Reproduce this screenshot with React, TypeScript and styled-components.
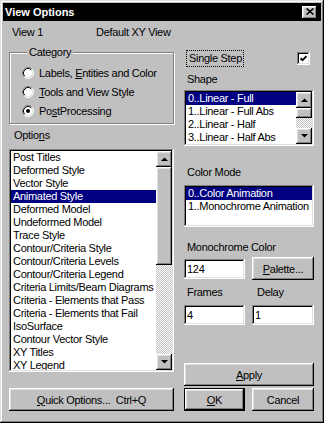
import styled, { createGlobalStyle, css } from "styled-components";

const GlobalStyle = createGlobalStyle`
  html, body { margin: 0; padding: 0; background: #c0c0c0; }
  body {
    font-family: "Liberation Sans", Arial, sans-serif;
    font-size: 11px;
    letter-spacing: -0.3px;
    color: #000;
  }
`;

const raised = css`
  box-shadow: inset -1px -1px #000, inset 1px 1px #fff, inset -2px -2px #808080, inset 2px 2px #dfdfdf;
`;
const sunken = css`
  box-shadow: inset -1px -1px #fff, inset 1px 1px #808080, inset -2px -2px #dfdfdf, inset 2px 2px #000;
`;

const Window = styled.div`
  width: 324px;
  height: 423px;
  box-sizing: border-box;
  padding: 3px;
  background: #c0c0c0;
  box-shadow: inset -1px -1px #000, inset 1px 1px #dfdfdf, inset -2px -2px #808080, inset 2px 2px #fff;
  display: flex;
  flex-direction: column;
`;

const TitleBar = styled.div`
  height: 18px;
  background: #000;
  display: flex;
  align-items: center;
  padding: 0 4px 0 2px;
`;

const Title = styled.span`
  color: #fff;
  font-weight: bold;
  letter-spacing: 0;
`;

const CloseButton = styled.div`
  margin-left: auto;
  width: 15px;
  height: 13px;
  background: #c0c0c0;
  ${raised};
  display: flex;
  align-items: center;
  justify-content: center;
  padding-bottom: 1px;
  box-sizing: border-box;
`;

const Body = styled.div`
  flex: 1;
  display: flex;
  flex-direction: column;
  padding: 5px 7px 9px 6px;
`;

const InfoRow = styled.div`
  display: flex;
  line-height: 13px;
  padding-left: 3px;
`;

const InfoCell = styled.span<{ $w?: number }>`
  width: ${(p) => (p.$w ? `${p.$w}px` : "auto")};
`;

const Columns = styled.div`
  flex: 1;
  margin-top: 6px;
  display: grid;
  grid-template-columns: 165px 130px;
  column-gap: 10px;
`;

const Column = styled.div`
  display: flex;
  flex-direction: column;
  min-height: 0;
`;

const GroupBox = styled.fieldset`
  margin: 0;
  min-width: 0;
  padding: 4px 0 3px 12px;
  border: 1px solid #808080;
  box-shadow: inset 1px 1px #fff, 1px 1px #fff;
`;

const Legend = styled.legend`
  margin-left: 5px;
  padding: 0 2px;
  line-height: 14px;
  background: #c0c0c0;
`;

const RadioRow = styled.div`
  display: flex;
  align-items: center;
  gap: 5px;
  height: 19px;
`;

const Label = styled.div<{ $mt?: number; $pl?: number }>`
  margin-top: ${(p) => p.$mt ?? 0}px;
  padding-left: ${(p) => p.$pl ?? 3}px;
  line-height: 13px;
  white-space: nowrap;
`;

const ListBox = styled.div<{ $mt?: number; $h: number }>`
  margin-top: ${(p) => p.$mt ?? 0}px;
  height: ${(p) => p.$h}px;
  box-sizing: border-box;
  padding: 2px;
  background: #fff;
  ${sunken};
  display: flex;
`;

const ListBody = styled.div`
  flex: 1;
  overflow: hidden;
  background: #fff;
`;

const ListItem = styled.div<{ $selected?: boolean }>`
  height: 13px;
  line-height: 13px;
  padding-left: 2px;
  white-space: nowrap;
  background: ${(p) => (p.$selected ? "#000080" : "transparent")};
  color: ${(p) => (p.$selected ? "#fff" : "#000")};
`;

const ScrollBar = styled.div`
  width: 16px;
  display: flex;
  flex-direction: column;
`;

const ScrollButton = styled.div`
  height: 16px;
  background: #c0c0c0;
  ${raised};
  display: flex;
  align-items: center;
  justify-content: center;
`;

const Thumb = styled.div<{ $h: number }>`
  height: ${(p) => p.$h}px;
  background: #c0c0c0;
  ${raised};
`;

const Track = styled.div`
  flex: 1;
  background: repeating-conic-gradient(#fff 0 25%, #c0c0c0 0 50%) 0 0 / 2px 2px;
`;

const Button = styled.button<{ $default?: boolean; $h?: number; $mt?: string }>`
  margin: 0;
  margin-top: ${(p) => p.$mt ?? "0"};
  height: ${(p) => p.$h ?? 23}px;
  border: none;
  padding: 0;
  font: inherit;
  letter-spacing: inherit;
  color: #000;
  background: #c0c0c0;
  white-space: pre;
  display: flex;
  align-items: center;
  justify-content: center;
  ${(p) =>
    p.$default
      ? css`box-shadow: inset 0 0 0 1px #000, inset -2px -2px #000, inset 2px 2px #fff, inset -3px -3px #808080, inset 3px 3px #dfdfdf;`
      : raised};
`;

const Field = styled.div`
  height: 20px;
  box-sizing: border-box;
  padding: 0 3px;
  line-height: 20px;
  background: #fff;
  ${sunken};
`;

const Pair = styled.div<{ $mt?: number }>`
  margin-top: ${(p) => p.$mt ?? 0}px;
  display: grid;
  grid-template-columns: 61px 62px;
  column-gap: 7px;
  align-items: center;
`;

const StepRow = styled.div`
  margin-top: 5px;
  height: 16px;
  display: flex;
  align-items: center;
  justify-content: space-between;
  padding: 0 4px 0 3px;
`;

const FocusText = styled.span`
  outline: 1px dotted #000;
  padding: 0 1px 0 2px;
  line-height: 15px;
`;

const CheckBox = styled.div`
  width: 13px;
  height: 13px;
  box-sizing: border-box;
  background: #fff;
  ${sunken};
  display: flex;
  align-items: center;
  justify-content: center;
`;

const Arrow = ({ up }: { up?: boolean }) => (
  <svg width="7" height="4" viewBox="0 0 7 4">
    <polygon points={up ? "0,4 7,4 3.5,0.5" : "0,0 7,0 3.5,3.5"} fill="#000" />
  </svg>
);

const Radio = ({ checked }: { checked?: boolean }) => (
  <svg width="12" height="12" viewBox="0 0 12 12">
    <circle cx="6" cy="6" r="5" fill="#fff" />
    <path d="M2.11 9.89 A5.5 5.5 0 0 1 9.89 2.11" fill="none" stroke="#808080" />
    <path d="M9.89 2.11 A5.5 5.5 0 0 1 2.11 9.89" fill="none" stroke="#fff" />
    <path d="M2.82 9.18 A4.5 4.5 0 0 1 9.18 2.82" fill="none" stroke="#000" />
    <path d="M9.18 2.82 A4.5 4.5 0 0 1 2.82 9.18" fill="none" stroke="#dfdfdf" />
    {checked && <circle cx="6" cy="6" r="2" fill="#000" />}
  </svg>
);

const options = [
  "Post Titles",
  "Deformed Style",
  "Vector Style",
  "Animated Style",
  "Deformed Model",
  "Undeformed Model",
  "Trace Style",
  "Contour/Criteria Style",
  "Contour/Criteria Levels",
  "Contour/Criteria Legend",
  "Criteria Limits/Beam Diagrams",
  "Criteria - Elements that Pass",
  "Criteria - Elements that Fail",
  "IsoSurface",
  "Contour Vector Style",
  "XY Titles",
  "XY Legend",
];

const shapes = ["0..Linear - Full", "1..Linear - Full Abs", "2..Linear - Half", "3..Linear - Half Abs"];
const colorModes = ["0..Color Animation", "1..Monochrome Animation"];

const App = () => {
  return (
    <>
      <GlobalStyle />
      <Window>
        <TitleBar>
          <Title>View Options</Title>
          <CloseButton>
            <svg width="8" height="7" viewBox="0 0 8 7">
              <path d="M0.6 0.5 L7.4 6.5 M7.4 0.5 L0.6 6.5" stroke="#000" strokeWidth="1.6" fill="none" />
            </svg>
          </CloseButton>
        </TitleBar>
        <Body>
          <InfoRow>
            <InfoCell $w={84}>View 1</InfoCell>
            <InfoCell>Default XY View</InfoCell>
          </InfoRow>
          <Columns>
            <Column>
              <GroupBox>
                <Legend>Category</Legend>
                <RadioRow>
                  <Radio />
                  <span>
                    Labels, <u>E</u>ntities and Color
                  </span>
                </RadioRow>
                <RadioRow>
                  <Radio />
                  <span>
                    <u>T</u>ools and View Style
                  </span>
                </RadioRow>
                <RadioRow>
                  <Radio checked />
                  <span>
                    Po<u>s</u>tProcessing
                  </span>
                </RadioRow>
              </GroupBox>
              <Label $mt={5} $pl={5}>
                Optio<u>n</u>s
              </Label>
              <ListBox $mt={7} $h={223}>
                <ListBody>
                  {options.map((o) => (
                    <ListItem key={o} $selected={o === "Animated Style"}>
                      {o}
                    </ListItem>
                  ))}
                </ListBody>
                <ScrollBar>
                  <ScrollButton>
                    <Arrow up />
                  </ScrollButton>
                  <Thumb $h={98} />
                  <Track />
                  <ScrollButton>
                    <Arrow />
                  </ScrollButton>
                </ScrollBar>
              </ListBox>
              <Button $mt="auto">
                <span>
                  <u>Q</u>uick Options...  Ctrl+Q
                </span>
              </Button>
            </Column>
            <Column>
              <StepRow>
                <FocusText>Single Step</FocusText>
                <CheckBox>
                  <svg width="7" height="7" viewBox="0 0 7 7">
                    <path d="M0.5 3.2 L2.5 5.2 L6.5 1.2" stroke="#000" strokeWidth="1.8" fill="none" />
                  </svg>
                </CheckBox>
              </StepRow>
              <Label $mt={7}>Shape</Label>
              <ListBox $mt={4} $h={56}>
                <ListBody>
                  {shapes.map((s, i) => (
                    <ListItem key={s} $selected={i === 0}>
                      {s}
                    </ListItem>
                  ))}
                </ListBody>
                <ScrollBar>
                  <ScrollButton>
                    <Arrow up />
                  </ScrollButton>
                  <Thumb $h={10} />
                  <Track />
                  <ScrollButton>
                    <Arrow />
                  </ScrollButton>
                </ScrollBar>
              </ListBox>
              <Label $mt={20}>Color Mode</Label>
              <ListBox $mt={6} $h={42}>
                <ListBody>
                  {colorModes.map((c, i) => (
                    <ListItem key={c} $selected={i === 0}>
                      {c}
                    </ListItem>
                  ))}
                </ListBody>
              </ListBox>
              <Label $mt={14}>Monochrome Color</Label>
              <Pair $mt={3}>
                <Field>124</Field>
                <Button>
                  <span>
                    <u>P</u>alette...
                  </span>
                </Button>
              </Pair>
              <Pair $mt={6}>
                <Label>Frames</Label>
                <Label $pl={5}>Delay</Label>
              </Pair>
              <Pair $mt={6}>
                <Field>4</Field>
                <Field>1</Field>
              </Pair>
              <Button $mt="auto">
                <span>
                  <u>A</u>pply
                </span>
              </Button>
              <Pair $mt={2}>
                <Button $default>
                  <span>
                    <u>O</u>K
                  </span>
                </Button>
                <Button>Cancel</Button>
              </Pair>
            </Column>
          </Columns>
        </Body>
      </Window>
    </>
  );
};

export default App;
